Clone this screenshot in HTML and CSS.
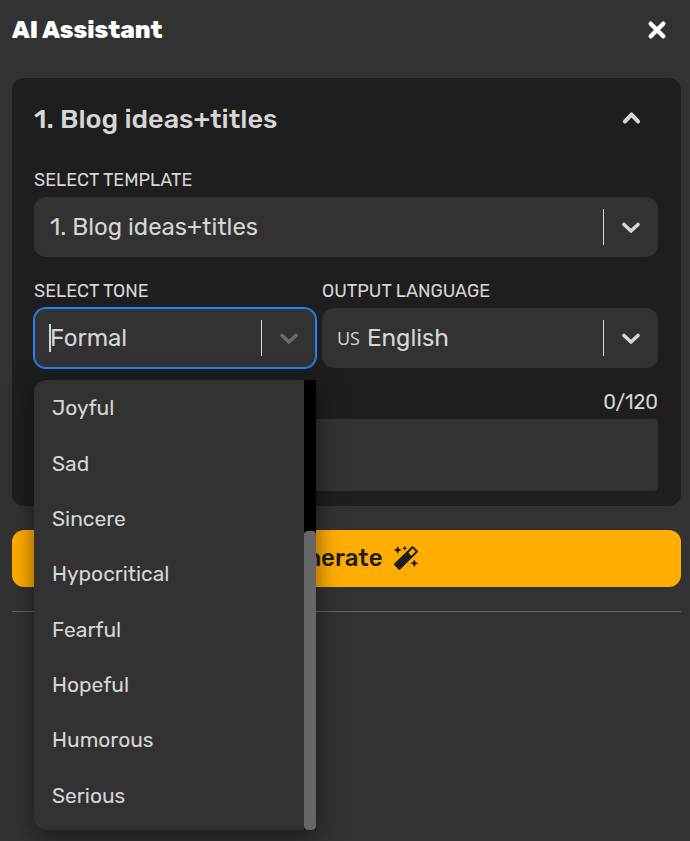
FILE: index.html
```html
<!DOCTYPE html>
<html lang="en">
<head>
<meta charset="utf-8">
<meta name="viewport" content="width=device-width, initial-scale=1">
<title>AI Assistant</title>
<link rel="stylesheet" href="styles.css">
</head>
<body>
<main class="panel">
  <header class="panel-head">
    <h1 class="panel-title">AI Assistant</h1>
    <button class="icon-button" type="button" aria-label="Close">
      <svg class="icon" viewBox="0 0 24 24"><path d="M5.700 5.700l12.600 12.600M18.300 5.700L5.700 18.300" stroke-width="4.400"/></svg>
    </button>
  </header>

  <form class="form">
    <section class="card">
      <div class="card-head">
        <h2 class="card-title">1. Blog ideas+titles</h2>
        <button class="icon-button" type="button" aria-label="Collapse">
          <svg class="icon" viewBox="0 0 24 24"><path d="M5 14.400L11.500 7.600l6.500 6.800" stroke-width="4.200"/></svg>
        </button>
      </div>

      <div class="field">
        <label class="label" for="template">SELECT TEMPLATE</label>
        <div class="control">
          <select class="value" id="template"><option>1. Blog ideas+titles</option></select>
          <span class="arrow"><svg class="icon" viewBox="0 0 24 24"><path d="M5 9.500l7 6.500 7-6.500" stroke-width="3.600"/></svg></span>
        </div>
      </div>

      <div class="row">
        <div class="field tone">
          <label class="label" for="tone">SELECT TONE</label>
          <div class="control control-focused">
            <input class="value" id="tone" type="text" role="combobox" aria-expanded="true" aria-controls="tone-menu" value="Formal">
            <span class="caret"></span>
            <span class="arrow arrow-dim"><svg class="icon" viewBox="0 0 24 24"><path d="M5 9.500l7 6.500 7-6.500" stroke-width="3.600"/></svg></span>
          </div>
          <div class="menu">
            <ul class="options" id="tone-menu" role="listbox" aria-label="Tone">
              <li class="option" role="option">Joyful</li>
              <li class="option" role="option">Sad</li>
              <li class="option" role="option">Sincere</li>
              <li class="option" role="option">Hypocritical</li>
              <li class="option" role="option">Fearful</li>
              <li class="option" role="option">Hopeful</li>
              <li class="option" role="option">Humorous</li>
              <li class="option" role="option">Serious</li>
            </ul>
            <div class="track"><div class="thumb"></div></div>
          </div>
        </div>
        <div class="field">
          <label class="label" for="language">OUTPUT LANGUAGE</label>
          <div class="control">
            <span class="flag">US</span>
            <select class="value value-flagged" id="language"><option>English</option></select>
            <span class="arrow"><svg class="icon" viewBox="0 0 24 24"><path d="M5 9.500l7 6.500 7-6.500" stroke-width="3.600"/></svg></span>
          </div>
        </div>
      </div>

      <div class="field">
        <div class="label counter">0/120</div>
        <textarea class="topic" aria-label="Topic" maxlength="120"></textarea>
      </div>
    </section>

    <button class="generate" type="button">
      <span>Generate</span>
      <svg class="wand" viewBox="0 0 24 24">
        <path fill-rule="evenodd" d="M17.800.5q.8-.8 1.600 0l4.200 4.200q.8.800 0 1.600L6.200 23.500q-.8.800-1.600 0L.4 19.200q-.8-.8 0-1.600zM18.700 2.600l-4.200 4.200 2.900 2.900 4.200-4.200z"/>
        <path d="M3.700 0l1.200 2.800 2.900 1.200-2.900 1.200L3.700 8 2.500 5.200-.3 4l2.800-1.200zM10.700-.2l.8 1.700 1.700.8-1.700.8-.8 1.700-.8-1.700-1.700-.8 1.700-.8zM20.300 13.400l1.200 2.700 2.700 1.200-2.700 1.200-1.200 2.700-1.200-2.700-2.700-1.200 2.700-1.200z"/>
      </svg>
    </button>
  </form>
  <hr class="rule">
</main>
</body>
</html>
```
FILE: styles.css
```css
* { box-sizing: border-box; }

body {
  margin: 0;
  min-height: 100vh;
  background: #323232;
  color: #d6d6d6;
  font-family: Rubik, Roboto, "Liberation Sans", sans-serif;
}

button, input, select, textarea { font: inherit; color: inherit; }

h1, h2, ul { margin: 0; padding: 0; }

.panel { padding: 0 9px 0 12px; }

.panel-head {
  display: flex;
  align-items: center;
  justify-content: space-between;
  height: 60px;
  margin-bottom: 18px;
  padding-right: 12px;
  color: #fff;
}

.panel-title { font-size: 24px; line-height: 32px; font-weight: 800; }

.icon-button {
  display: flex;
  padding: 0;
  border: 0;
  background: none;
  cursor: pointer;
}

.icon {
  width: 24px;
  height: 24px;
  fill: none;
  stroke: currentColor;
  stroke-linecap: round;
  stroke-linejoin: round;
}

.card {
  padding: 22px 23px 15px 22px;
  border-radius: 12px;
  background: #1e1e1e;
}

.card-head {
  display: flex;
  align-items: center;
  justify-content: space-between;
  height: 38px;
  margin-bottom: 30px;
  padding-right: 14px;
}

.card-title { font-size: 27px; line-height: 38px; font-weight: 500; }

.field {
  display: flex;
  flex-direction: column;
  min-width: 0;
}

.label {
  margin-bottom: 5px;
  font-size: 18px;
  line-height: 24px;
}

.control {
  position: relative;
  display: flex;
  align-items: center;
  height: 60px;
  border-radius: 12px;
  background: #323232;
}

.control-focused { box-shadow: 0 0 0 1px #2684ff, inset 0 0 0 1px #2680eb; }

.value {
  flex: 1;
  min-width: 0;
  height: 60px;
  padding: 0 0 0 16px;
  border: 0;
  outline: 0;
  background: none;
  appearance: none;
  font-size: 24px;
}

.value-flagged { padding-left: 7px; }

.flag {
  padding-left: 15px;
  font-family: "Open Sans", sans-serif;
  font-size: 18px;
  font-weight: 500;
}

.caret {
  position: absolute;
  left: 15px;
  top: 16px;
  width: 2px;
  height: 28px;
  background: #d6d6d6;
}

.arrow {
  display: flex;
  align-items: center;
  justify-content: center;
  width: 55px;
  height: 36px;
  border-left: 1px solid #d6d6d6;
  pointer-events: none;
}

.arrow-dim .icon { opacity: 0.35; }

.row {
  display: grid;
  grid-template-columns: 282fr 336fr;
  gap: 6px;
  margin: 22px 0;
}

.tone { position: relative; }

.menu {
  position: absolute;
  z-index: 2;
  top: calc(100% + 12px);
  left: 0;
  right: 0;
  display: flex;
  height: 450px;
  border-radius: 12px 0 0 12px;
  background: #323232;
  box-shadow: 0 6px 24px rgba(0, 0, 0, 0.5);
}

.options {
  flex: 1;
  display: grid;
  grid-auto-rows: 1fr;
  padding-bottom: 7px;
  list-style: none;
}

.option {
  display: flex;
  align-items: center;
  padding: 0 18px;
  font-size: 21px;
}

.track {
  display: flex;
  align-items: flex-end;
  width: 12px;
  background: #000;
}

.thumb {
  width: 100%;
  height: 66.4%;
  border-radius: 4px;
  background: #666;
}

.counter { text-align: right; font-size: 20px; }

.topic {
  display: block;
  width: 100%;
  height: 72px;
  padding: 12px 16px;
  border: 0;
  border-radius: 4px;
  background: #323232;
  resize: none;
}

.generate {
  display: flex;
  align-items: center;
  justify-content: center;
  gap: 11px;
  width: 100%;
  height: 57px;
  margin: 24px 0;
  padding: 0 0 2px;
  border: 0;
  border-radius: 12px;
  background: #ffad00;
  color: #1e1e1e;
  font-size: 24px;
  font-weight: 500;
}

.wand { width: 24px; height: 24px; fill: currentColor; }

.rule {
  height: 1px;
  margin: 0;
  border: 0;
  background: #646464;
}
```
